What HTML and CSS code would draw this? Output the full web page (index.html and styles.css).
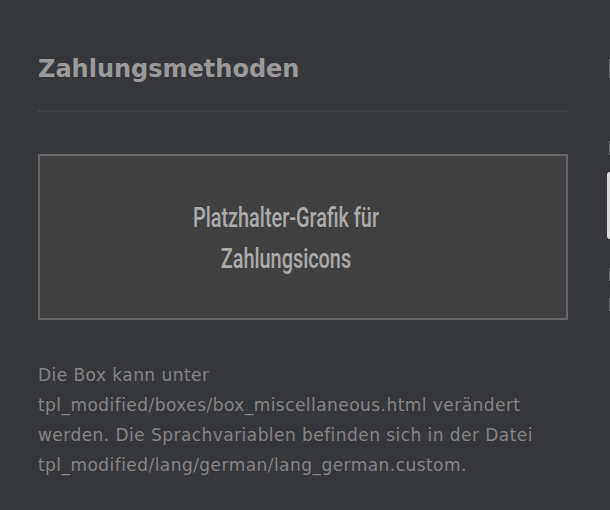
FILE: index.html
```html
<!DOCTYPE html>
<html lang="de">
<head>
<meta charset="utf-8">
<title>Zahlungsmethoden</title>
<link rel="stylesheet" href="styles.css">
</head>
<body>
<div class="page">
  <section class="box">
    <h2 class="box-title">Zahlungsmethoden</h2>
    <div class="divider"></div>
    <div class="placeholder">
      <span class="placeholder-text">Platzhalter-Grafik für<br>Zahlungsicons</span>
    </div>
    <p class="box-text">Die Box kann unter<br>tpl_modified/boxes/box_miscellaneous.html verändert<br>werden. Die Sprachvariablen befinden sich in der Datei tpl_modified/lang/german/lang_german.custom.</p>
  </section>
  <aside class="edge">
    <span class="edge-bar e1"></span>
    <span class="edge-bar e2"></span>
    <span class="edge-input"></span>
    <span class="edge-bar e3"></span>
    <span class="edge-bar e4"></span>
  </aside>
</div>
</body>
</html>
```

FILE: styles.css
```css
html, body {
  margin: 0;
  padding: 0;
  background: #36373a;
  height: 100%;
}
.page {
  display: flex;
  height: 510px;
  overflow: hidden;
}
.box {
  width: 530px;
  margin-left: 38px;
  padding-top: 52px;
}
.box-title {
  margin: 0;
  font-family: "DejaVu Sans", sans-serif;
  font-weight: bold;
  font-size: 24px;
  line-height: 34px;
  color: #9a9a9a;
}
.divider {
  margin-top: 24px;
  height: 2px;
  background: #404144;
}
.placeholder {
  margin-top: 42px;
  height: 162px;
  border: 2px solid #666666;
  background: #404040;
  display: flex;
  align-items: center;
  justify-content: center;
  padding-right: 34px;
}
.placeholder-text {
  font-family: "Roboto", sans-serif;
  font-weight: 500;
  font-size: 28px;
  line-height: 41px;
  color: #ababab;
  text-align: center;
  display: block;
  margin-top: 1px;
  transform: scaleX(0.71);
  white-space: nowrap;
}
.box-text {
  margin: 40px 0 0;
  font-family: "DejaVu Sans", sans-serif;
  font-weight: normal;
  font-size: 17px;
  letter-spacing: 0.45px;
  line-height: 30px;
  color: #858585;
}
.edge {
  margin-left: 39px;
  width: 3px;
  display: flex;
  flex-direction: column;
  align-items: flex-end;
  padding-top: 59px;
}
.edge-bar {
  display: block;
  width: 1px;
  background: #6a6a6a;
}
.e1 { height: 19px; }
.e2 { height: 14px; margin-top: 63px; }
.edge-input {
  display: block;
  width: 3px;
  height: 67px;
  margin-top: 17px;
  background: #dcdcdc;
  border-radius: 3px 0 0 3px;
}
.e3 { height: 13px; margin-top: 29px; }
.e4 { height: 13px; margin-top: 17px; }
```
